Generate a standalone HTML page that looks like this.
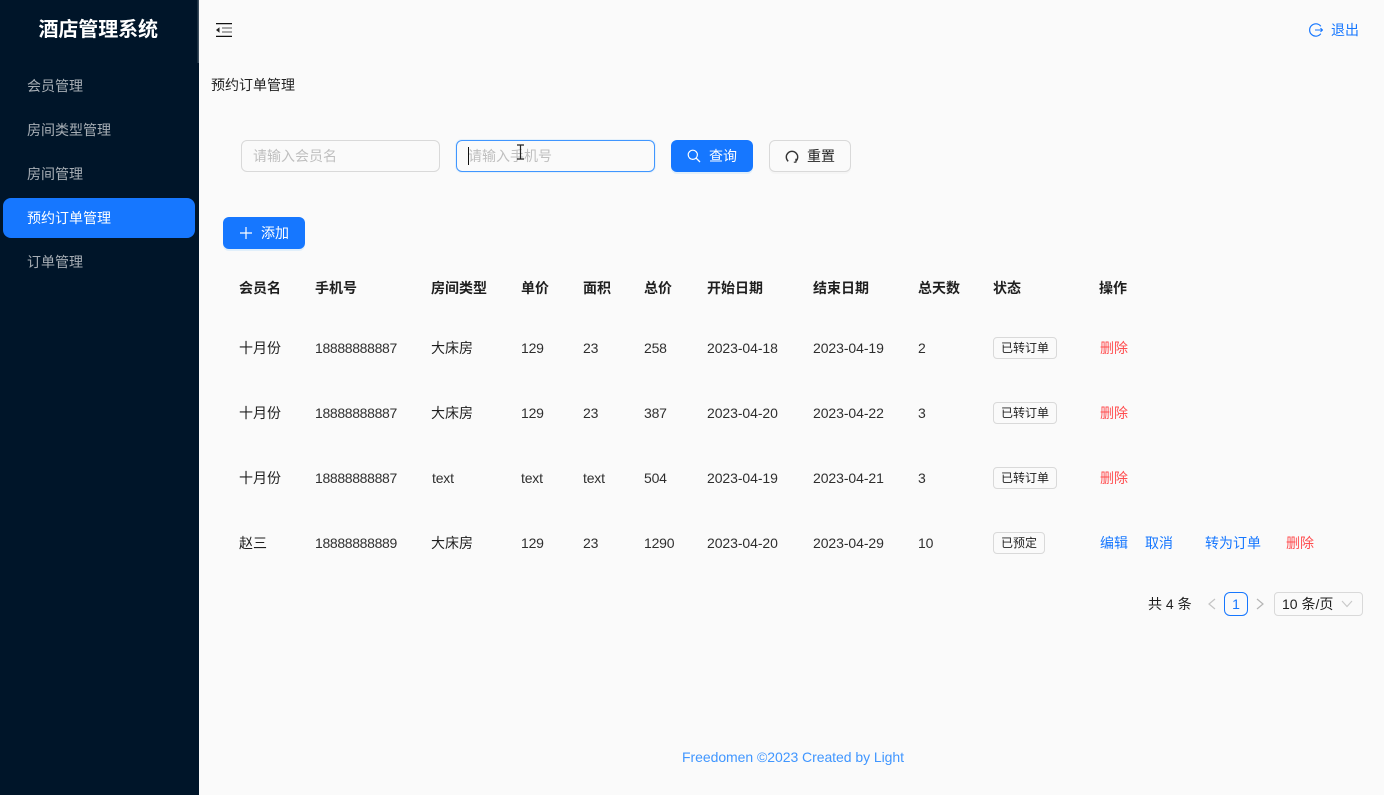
<!DOCTYPE html>
<html lang="zh-CN">
<head>
<meta charset="utf-8">
<title>酒店管理系统</title>
<style>
*{box-sizing:border-box}
html,body{margin:0;padding:0;width:1384px;height:795px;overflow:hidden;background:#fafafa}
body{position:relative;font-family:"Liberation Sans","Noto Sans CJK SC",sans-serif;font-size:14px;color:rgba(0,0,0,.88)}
.a{position:absolute;white-space:nowrap;line-height:20px}
.side{position:absolute;left:0;top:0;width:199px;height:795px;background:#001529}
.shadow{position:absolute;left:197px;top:0;width:2px;height:63px;background:linear-gradient(90deg,#0c2236,#4a5a68)}
.m{position:absolute;left:27px;color:rgba(255,255,255,.65);line-height:20px}
.active{position:absolute;left:3px;top:198px;width:192px;height:40px;background:#1677ff;border-radius:8px}
.box{position:absolute;height:32px;border-radius:6px;border:1px solid #d9d9d9}
.btn{position:absolute;height:32px;border-radius:6px;background:#1677ff;color:#fff;box-shadow:0 2px 0 rgba(5,145,255,.1)}
.ph{color:#bfbfbf}
.th{position:absolute;top:278px;line-height:20px;white-space:nowrap;font-weight:700;color:rgba(0,0,0,.88)}
.tag{position:absolute;height:22px;border:1px solid #d9d9d9;border-radius:4px;background:#fafafa;font-size:12px;line-height:20px;padding:0 7px;white-space:nowrap}
.blue{color:#1677ff}
.red{color:#ff4d4f}
.n{letter-spacing:-.2px;color:rgba(0,0,0,.82)}
.p{letter-spacing:-.34px;color:rgba(0,0,0,.82)}
.d{letter-spacing:-.08px;color:rgba(0,0,0,.82)}
svg{position:absolute;display:block}
</style>
</head>
<body>
<div class="side"></div>
<div class="shadow"></div>
<div class="a" style="left:38.5px;top:18px;font-size:20px;font-weight:700;line-height:24px;color:#fff;letter-spacing:-.1px">酒店管理系统</div>
<div class="m" style="top:76px">会员管理</div>
<div class="m" style="top:120px">房间类型管理</div>
<div class="m" style="top:164px">房间管理</div>
<div class="active"></div>
<div class="m" style="top:208px;color:#fff">预约订单管理</div>
<div class="m" style="top:252px">订单管理</div>

<svg style="left:216px;top:23px" width="16" height="14" viewBox="0 0 16 14"><path d="M0 .6H16M0 13.400H16" stroke="#111" stroke-width="1.200" fill="none"/><path d="M6 5H16M6 9H16" stroke="#777" stroke-width="1.300" fill="none"/><path d="M0 7L3.500 4.200V9.800Z" fill="#222"/></svg>

<svg style="left:1309px;top:23px" width="14" height="14" viewBox="0 0 14 14"><path d="M11.800 3.300A6.200 6.200 0 1 0 11.800 10.700" stroke="#1677ff" stroke-width="1.200" fill="none"/><path d="M6 7H13.500M11.500 5.200L13.500 7L11.500 8.800" stroke="#1677ff" stroke-width="1.100" fill="none"/></svg>
<div class="a blue" style="left:1331px;top:20px">退出</div>

<div class="a" style="left:211px;top:75px">预约订单管理</div>

<div class="box" style="left:241px;top:140px;width:199px"></div>
<div class="a ph" style="left:253px;top:146px">请输入会员名</div>
<div class="box" style="left:456px;top:140px;width:199px;border-color:#4096ff;box-shadow:0 0 0 1px rgba(5,145,255,.08)"></div>
<div class="a ph" style="left:468px;top:146px">请输入手机号</div>
<div class="a" style="left:468px;top:147px;width:1px;height:18px;background:#111"></div>
<svg style="left:515px;top:143px" width="11" height="18" viewBox="0 0 11 18"><path d="M2 2H9M2 16H9M5.500 2V16" stroke="#222" stroke-width="1.200" fill="none"/></svg>

<div class="btn" style="left:671px;top:140px;width:82px"></div>
<svg style="left:687px;top:149px" width="14" height="14" viewBox="0 0 14 14"><circle cx="5.800" cy="5.800" r="4.600" stroke="#fff" stroke-width="1.200" fill="none"/><path d="M9.200 9.200L13 13" stroke="#fff" stroke-width="1.300"/></svg>
<div class="a" style="left:709px;top:146px;color:#fff">查询</div>

<div class="box" style="left:769px;top:140px;width:82px;box-shadow:0 2px 0 rgba(0,0,0,.02)"></div>
<svg style="left:785px;top:149px" width="14" height="14" viewBox="0 0 14 14"><path d="M3.200 12.300A5.700 5.700 0 1 1 10.800 12.300" stroke="#333" stroke-width="1.400" fill="none"/><path d="M10.900 9.800V13.200H8.800" stroke="#333" stroke-width="1.100" fill="none"/></svg>
<div class="a" style="left:807px;top:146px">重置</div>

<div class="btn" style="left:223px;top:217px;width:82px"></div>
<svg style="left:239px;top:226px" width="14" height="14" viewBox="0 0 14 14"><path d="M7 1V13M1 7H13" stroke="#fff" stroke-width="1.200"/></svg>
<div class="a" style="left:261px;top:223px;color:#fff">添加</div>

<div class="th" style="left:239px">会员名</div>
<div class="th" style="left:315px">手机号</div>
<div class="th" style="left:431px">房间类型</div>
<div class="th" style="left:521px">单价</div>
<div class="th" style="left:583px">面积</div>
<div class="th" style="left:644px">总价</div>
<div class="th" style="left:707px">开始日期</div>
<div class="th" style="left:813px">结束日期</div>
<div class="th" style="left:918px">总天数</div>
<div class="th" style="left:993px">状态</div>
<div class="th" style="left:1099px">操作</div>

<div class="a" style="left:239px;top:338px">十月份</div>
<div class="a p" style="left:315px;top:338px">18888888887</div>
<div class="a" style="left:431px;top:338px">大床房</div>
<div class="a n" style="left:521px;top:338px">129</div>
<div class="a n" style="left:583px;top:338px">23</div>
<div class="a n" style="left:644px;top:338px">258</div>
<div class="a d" style="left:707px;top:338px">2023-04-18</div>
<div class="a d" style="left:813px;top:338px">2023-04-19</div>
<div class="a n" style="left:918px;top:338px">2</div>
<div class="tag" style="left:993px;top:337px">已转订单</div>
<div class="a red" style="left:1100px;top:338px">删除</div>

<div class="a" style="left:239px;top:403px">十月份</div>
<div class="a p" style="left:315px;top:403px">18888888887</div>
<div class="a" style="left:431px;top:403px">大床房</div>
<div class="a n" style="left:521px;top:403px">129</div>
<div class="a n" style="left:583px;top:403px">23</div>
<div class="a n" style="left:644px;top:403px">387</div>
<div class="a d" style="left:707px;top:403px">2023-04-20</div>
<div class="a d" style="left:813px;top:403px">2023-04-22</div>
<div class="a n" style="left:918px;top:403px">3</div>
<div class="tag" style="left:993px;top:402px">已转订单</div>
<div class="a red" style="left:1100px;top:403px">删除</div>

<div class="a" style="left:239px;top:468px">十月份</div>
<div class="a p" style="left:315px;top:468px">18888888887</div>
<div class="a n" style="left:432px;top:468px">text</div>
<div class="a n" style="left:521px;top:468px">text</div>
<div class="a n" style="left:583px;top:468px">text</div>
<div class="a n" style="left:644px;top:468px">504</div>
<div class="a d" style="left:707px;top:468px">2023-04-19</div>
<div class="a d" style="left:813px;top:468px">2023-04-21</div>
<div class="a n" style="left:918px;top:468px">3</div>
<div class="tag" style="left:993px;top:467px">已转订单</div>
<div class="a red" style="left:1100px;top:468px">删除</div>

<div class="a" style="left:239px;top:533px">赵三</div>
<div class="a p" style="left:315px;top:533px">18888888889</div>
<div class="a" style="left:431px;top:533px">大床房</div>
<div class="a n" style="left:521px;top:533px">129</div>
<div class="a n" style="left:583px;top:533px">23</div>
<div class="a n" style="left:644px;top:533px">1290</div>
<div class="a d" style="left:707px;top:533px">2023-04-20</div>
<div class="a d" style="left:813px;top:533px">2023-04-29</div>
<div class="a n" style="left:918px;top:533px">10</div>
<div class="tag" style="left:993px;top:532px">已预定</div>
<div class="a blue" style="left:1100px;top:533px">编辑</div>
<div class="a blue" style="left:1145px;top:533px">取消</div>
<div class="a blue" style="left:1205px;top:533px">转为订单</div>
<div class="a red" style="left:1286px;top:533px">删除</div>

<div class="a" style="left:1148px;top:594px">共 4 条</div>
<svg style="left:1207px;top:598px" width="10" height="12" viewBox="0 0 10 12"><path d="M8 1L2 6L8 11" stroke="#c4c4c4" stroke-width="1.200" fill="none"/></svg>
<div class="a blue" style="left:1224px;top:592px;width:24px;height:24px;border:1px solid #1677ff;border-radius:6px;text-align:center;line-height:22px">1</div>
<svg style="left:1255px;top:598px" width="10" height="12" viewBox="0 0 10 12"><path d="M2 1L8 6L2 11" stroke="#b5b5b5" stroke-width="1.200" fill="none"/></svg>
<div class="a" style="left:1274px;top:592px;width:89px;height:24px;border:1px solid #d9d9d9;border-radius:4px"></div>
<div class="a" style="left:1282px;top:594px">10 条/页</div>
<svg style="left:1341px;top:600px" width="12" height="8" viewBox="0 0 12 8"><path d="M1 1L6 6.500L11 1" stroke="#c8c8c8" stroke-width="1.100" fill="none"/></svg>

<div class="a" style="left:682px;top:747px;color:#4096ff;letter-spacing:-.05px">Freedomen ©2023 Created by Light</div>
</body>
</html>
